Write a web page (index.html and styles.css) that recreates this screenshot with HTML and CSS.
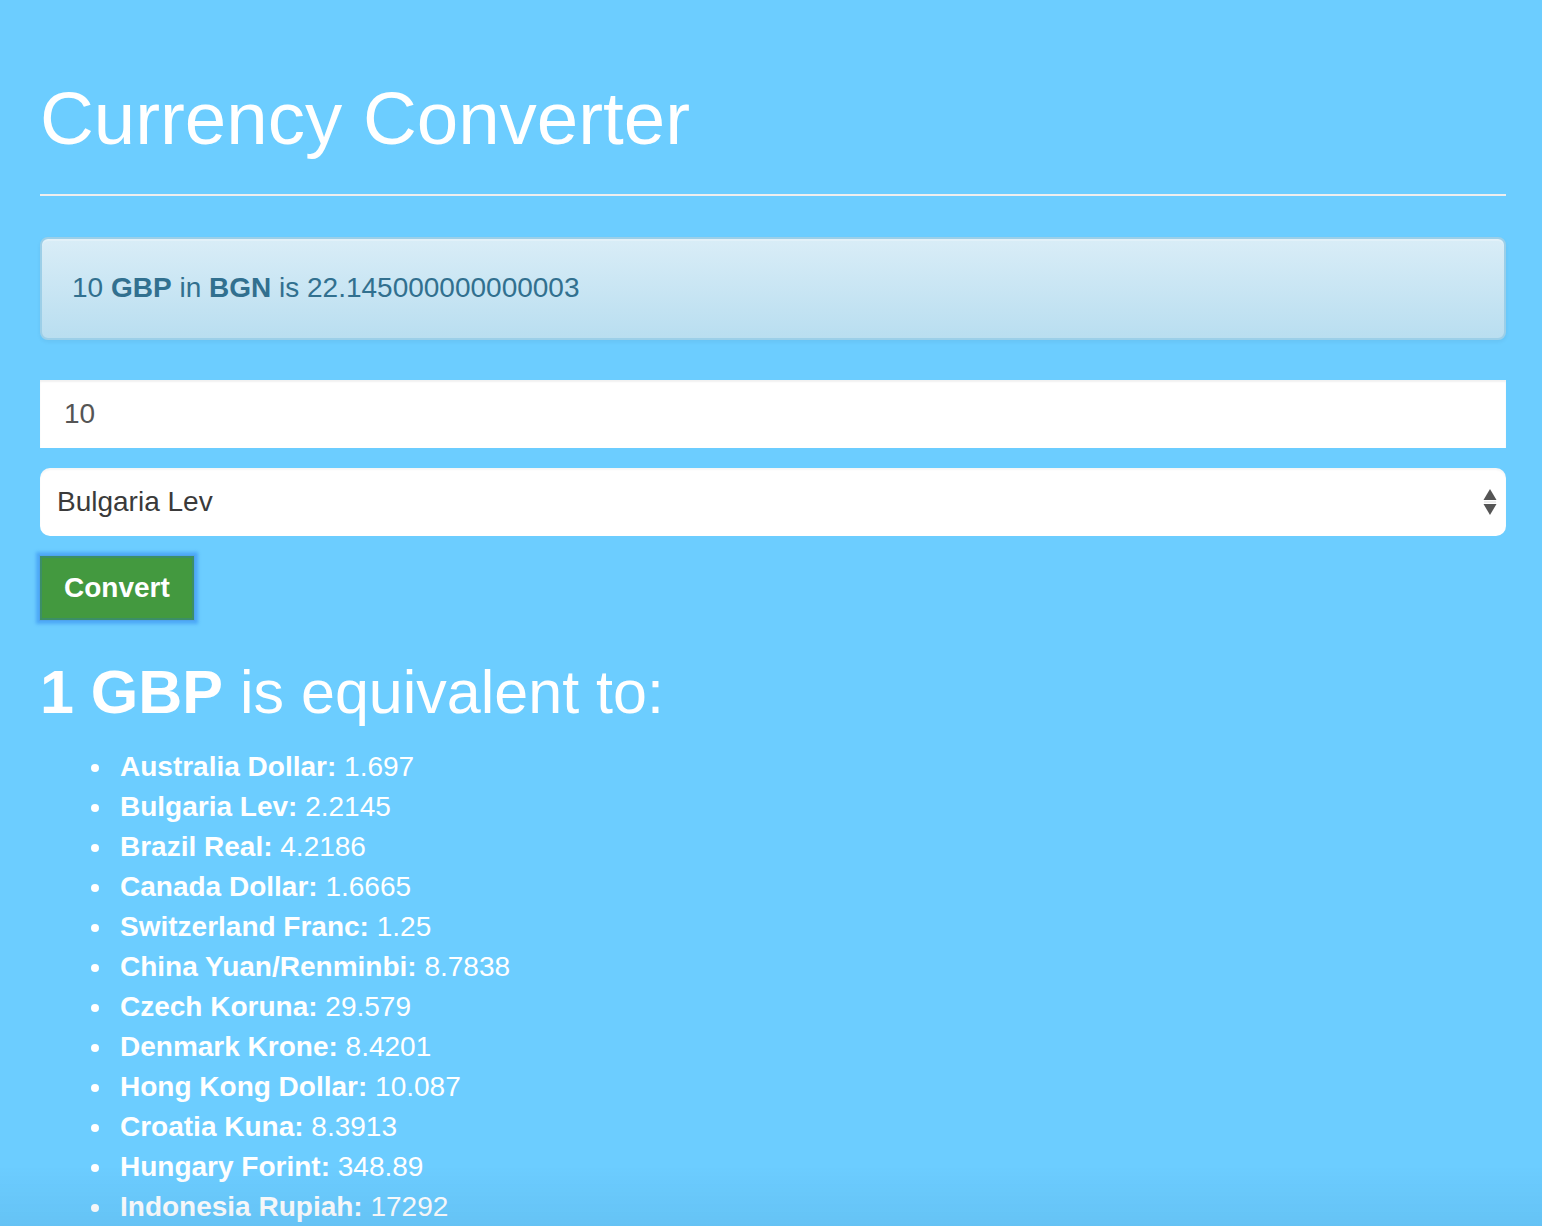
FILE: index.html
```html
<!DOCTYPE html>
<html lang="en">
<head>
<meta charset="utf-8">
<title>Currency Converter</title>
<link rel="stylesheet" href="styles.css">
</head>
<body>
<div class="container">
  <div class="page-header">
    <h1>Currency Converter</h1>
  </div>

  <div class="alert">10 <strong>GBP</strong> in <strong>BGN</strong> is 22.145000000000003</div>

  <form class="form">
    <div class="input">10</div>
    <div class="select">
      <span>Bulgaria Lev</span>
      <svg class="arrows" width="14" height="26" viewBox="0 0 14 26">
        <path d="M7 0 L13.5 11 L0.5 11 Z" fill="#555"/>
        <rect x="1" y="12.5" width="12" height="1" fill="#ddd"/>
        <path d="M0.5 15 L13.5 15 L7 26 Z" fill="#555"/>
      </svg>
    </div>
    <div class="btn">Convert</div>
  </form>

  <h2><strong>1 GBP</strong> is equivalent to:</h2>
  <ul class="rates">
    <li><strong>Australia Dollar:</strong> 1.697</li>
    <li><strong>Bulgaria Lev:</strong> 2.2145</li>
    <li><strong>Brazil Real:</strong> 4.2186</li>
    <li><strong>Canada Dollar:</strong> 1.6665</li>
    <li><strong>Switzerland Franc:</strong> 1.25</li>
    <li><strong>China Yuan/Renminbi:</strong> 8.7838</li>
    <li><strong>Czech Koruna:</strong> 29.579</li>
    <li><strong>Denmark Krone:</strong> 8.4201</li>
    <li><strong>Hong Kong Dollar:</strong> 10.087</li>
    <li><strong>Croatia Kuna:</strong> 8.3913</li>
    <li><strong>Hungary Forint:</strong> 348.89</li>
    <li><strong>Indonesia Rupiah:</strong> 17292</li>
  </ul>
</div>
<div class="shade"></div>
</body>
</html>
```

FILE: styles.css
```css
html, body {
  margin: 0;
  padding: 0;
}
body {
  background: #6ccdff;
  font-family: "Liberation Sans", Arial, Helvetica, sans-serif;
  font-size: 28px;
  line-height: 40px;
  color: #fff;
}
.container {
  padding: 0 36px 0 40px;
}
.page-header {
  padding-top: 78px;
  padding-bottom: 35px;
  border-bottom: 2px solid #eeeeee;
}
h1 {
  margin: 0;
  font-size: 74.5px;
  line-height: 81px;
  font-weight: normal;
  color: #fff;
}
.alert {
  margin-top: 41px;
  padding: 29px 30px;
  border: 2px solid #9ccfe8;
  border-radius: 8px;
  background: linear-gradient(to bottom, #d9edf7 0%, #b9def0 100%);
  color: #31708f;
  box-shadow: inset 0 2px 0 rgba(255,255,255,.25), 0 2px 4px rgba(0,0,0,.05);
  height: 41px;
}
.alert strong {
  font-weight: bold;
}
.form {
  margin: 40px 0 0;
}
.input {
  height: 68px;
  box-sizing: border-box;
  background: #fff;
  padding: 14px 24px;
  color: #555;
  box-shadow: inset 0 2px 2px rgba(0,0,0,.06);
}
.select {
  margin-top: 20px;
  height: 68px;
  box-sizing: border-box;
  background: #fff;
  border-radius: 10px;
  padding: 14px 9px 14px 17px;
  color: #3a3a3a;
  display: flex;
  align-items: center;
  justify-content: space-between;
  box-shadow: inset 0 2px 2px rgba(0,0,0,.04);
}
.arrows {
  display: block;
}
.btn {
  display: inline-block;
  margin-top: 20px;
  padding: 10px 22px;
  border: 2px solid #3b8f66;
  background: #43993f;
  color: #fff;
  font-weight: bold;
  box-shadow: 0 0 0 1px #4fa3ec, 0 0 3px 4px rgba(70, 160, 245, .8);
}
h2 {
  margin: 39px 0 0;
  font-size: 61px;
  line-height: 67px;
  font-weight: normal;
}
h2 strong {
  font-weight: bold;
}
.rates {
  margin: 21px 0 0;
  padding-left: 80px;
  list-style: none;
}
.rates li {
  line-height: 40px;
}
.rates li::before {
  content: "";
  display: inline-block;
  width: 8px;
  height: 8px;
  border-radius: 50%;
  background: #fff;
  margin-left: -29px;
  margin-right: 21px;
  vertical-align: 4px;
}
.shade {
  position: fixed;
  left: 0;
  right: 0;
  bottom: 0;
  height: 60px;
  background: linear-gradient(to bottom, rgba(0,40,80,0) 0%, rgba(0,40,80,.06) 100%);
  pointer-events: none;
}
```
